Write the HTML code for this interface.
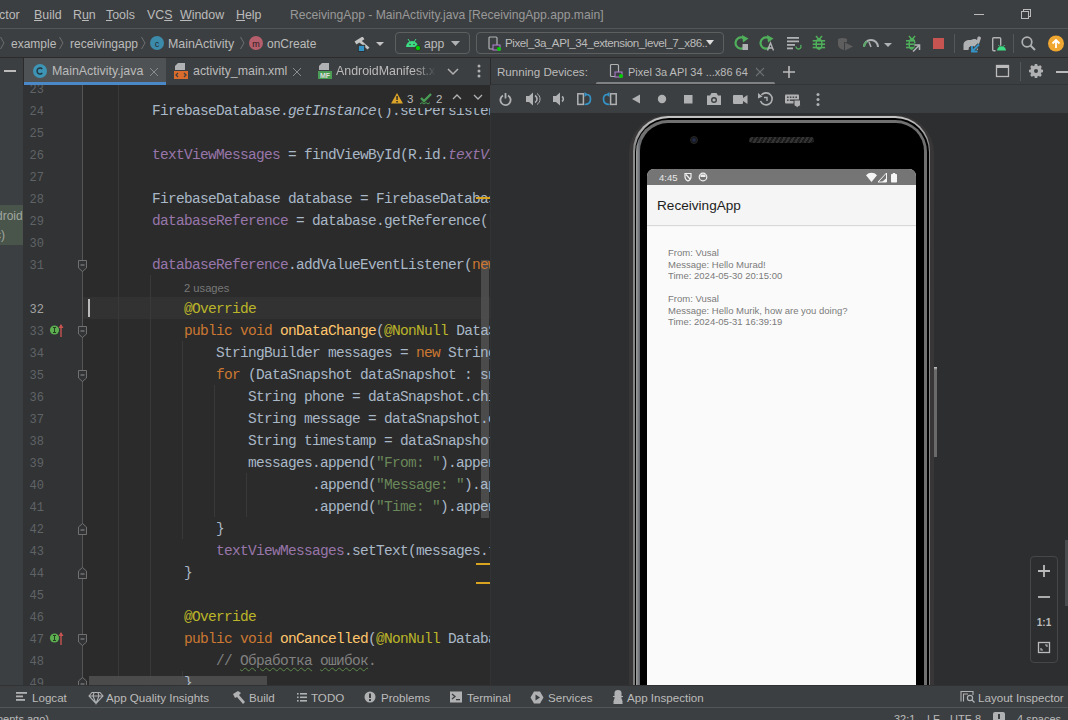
<!DOCTYPE html>
<html><head><meta charset="utf-8">
<style>
*{margin:0;padding:0;box-sizing:border-box}
html,body{width:1068px;height:720px;overflow:hidden;background:#3C3F41;font-family:"Liberation Sans",sans-serif;font-size:13px;color:#BBBBBB}
.a{position:absolute}
.t{position:absolute;white-space:nowrap;line-height:16px}
#menu{left:0;top:0;width:1068px;height:29px;background:#3C3F41;border-bottom:1px solid #515658}
#tb{left:0;top:29px;width:1068px;height:28px;background:#3C3F41}
#tabs{left:0;top:57px;width:1068px;height:28px;background:#3C3F41;border-top:1px solid #2B2B2B}
#ed{left:23px;top:85px;width:467px;height:600px;background:#2B2B2B;overflow:hidden}
#gut{left:0;top:0;width:59px;height:601px;background:#313335}
#emu{left:491px;top:113px;width:577px;height:572px;background:#2D2E30;overflow:hidden}
#twb{left:0;top:685px;width:1068px;height:22px;background:#3C3F41;border-top:1px solid #323232}
#sb{left:0;top:707px;width:1068px;height:13px;background:#3C3F41;border-top:1px solid #515658}
.code{position:absolute;left:65px;white-space:pre;font-family:"Liberation Mono",monospace;font-size:14.5px;letter-spacing:-0.7px;line-height:22px;color:#A9B7C6;margin-top:1px}
.ln.cur{color:#A4A3A3}
.ln{position:absolute;left:0;width:21px;margin-top:2px;text-align:right;font-family:"Liberation Mono",monospace;font-size:12px;line-height:22px;color:#606366}
.k{color:#CC7832}.an{color:#BBB529}.f{color:#9876AA}.fi{color:#9876AA;font-style:italic}.m{color:#FFC66D}.s{color:#6A8759}.c{color:#808080}.i{font-style:italic}.typo{text-decoration:underline wavy #5D8A4B;text-decoration-thickness:1px;text-underline-offset:2px}
</style></head><body>
<!-- MENU -->
<div id="menu" class="a">
  <div class="t" style="left:-1px;top:7px;font-size:12.4px">ctor</div>
  <div class="t" style="left:34px;top:7px;font-size:12.4px"><u>B</u>uild</div>
  <div class="t" style="left:73px;top:7px;font-size:12.4px">R<u>u</u>n</div>
  <div class="t" style="left:106px;top:7px;font-size:12.4px"><u>T</u>ools</div>
  <div class="t" style="left:147px;top:7px;font-size:12.4px">VC<u>S</u></div>
  <div class="t" style="left:180px;top:7px;font-size:12.4px"><u>W</u>indow</div>
  <div class="t" style="left:236px;top:7px;font-size:12.4px"><u>H</u>elp</div>
  <div class="t" style="left:290px;top:7px;font-size:12.15px;color:#999999">ReceivingApp - MainActivity.java [ReceivingApp.app.main]</div>
  <div class="a" style="left:974px;top:14px;width:10px;height:1px;background:#BBBBBB"></div>
  <div class="a" style="left:1023px;top:9px;width:8px;height:8px;border:1px solid #BBBBBB"></div>
  <div class="a" style="left:1021px;top:11px;width:8px;height:8px;border:1px solid #BBBBBB;background:#3C3F41"></div>
</div>
<!-- TOOLBAR -->
<div id="tb" class="a">
  <svg class="a" style="left:0;top:0" width="340" height="28">
    <g fill="none" stroke="#6E6E6E" stroke-width="1">
      <polyline points="0.5,8 4,14 0.5,20"/>
      <polyline points="59.5,8 63,14 59.5,20"/>
      <polyline points="141.5,8 145,14 141.5,20"/>
      <polyline points="240.5,8 244,14 240.5,20"/>
    </g>
    <circle cx="157" cy="14" r="7" fill="#3D8BAB"/>
    <text x="157" y="17.5" font-family="Liberation Sans" font-size="9" fill="#1E2A30" text-anchor="middle">c</text>
    <circle cx="256" cy="14" r="7" fill="#B55E6C"/>
    <text x="256" y="17.5" font-family="Liberation Sans" font-size="9" fill="#2B1A1E" text-anchor="middle">m</text>
  </svg>
  <div class="t" style="left:11px;top:7px;font-size:12px">example</div>
  <div class="t" style="left:70px;top:7px;font-size:12px">receivingapp</div>
  <div class="t" style="left:168px;top:7px;font-size:12.4px">MainActivity</div>
  <div class="t" style="left:267px;top:7px;font-size:12px">onCreate</div>
  <!-- hammer -->
  <svg class="a" style="left:354px;top:8px" width="32" height="16">
    <line x1="1.5" y1="6" x2="9.5" y2="0.8" stroke="#C4C4C4" stroke-width="3.3"/>
    <line x1="5.5" y1="3.8" x2="14.5" y2="11.5" stroke="#C4C4C4" stroke-width="2.8"/>
    <rect x="4.3" y="8.3" width="6.4" height="6.2" fill="#3592C4" stroke="#2E3133" stroke-width="1"/>
    <path d="M22,4.9 L30,4.9 L26,9 Z" fill="#C4C4C4"/>
  </svg>
  <!-- app combobox -->
  <div class="a" style="left:395px;top:3px;width:75px;height:22px;border:1px solid #5E6060;border-radius:4px"></div>
  <svg class="a" style="left:405px;top:8px" width="16" height="14">
    <path d="M1,10 A6,6 0 0 1 13,10 Z" fill="#3DDC84"/>
    <line x1="3" y1="2" x2="5" y2="5" stroke="#3DDC84" stroke-width="1"/>
    <line x1="11" y1="2" x2="9" y2="5" stroke="#3DDC84" stroke-width="1"/>
    <circle cx="5" cy="7.5" r="0.8" fill="#3C3F41"/><circle cx="9" cy="7.5" r="0.8" fill="#3C3F41"/>
    <circle cx="13" cy="11" r="2.6" fill="#00D000" stroke="#2B2B2B" stroke-width="0.8"/>
  </svg>
  <div class="t" style="left:424px;top:7px;font-size:12.2px">app</div>
  <svg class="a" style="left:451px;top:12px" width="12" height="6"><path d="M0,0 L9,0 L4.5,5 Z" fill="#AFB1B3"/></svg>
  <!-- device combobox -->
  <div class="a" style="left:476px;top:3px;width:248px;height:22px;border:1px solid #5E6060;border-radius:4px"></div>
  <svg class="a" style="left:488px;top:7px" width="14" height="16">
    <rect x="1" y="1" width="8" height="12" rx="1" fill="none" stroke="#AFB1B3" stroke-width="1.2"/>
    <rect x="5" y="9" width="7" height="5" fill="#3C3F41" stroke="#B37FD3" stroke-width="1"/>
    <circle cx="11" cy="13" r="2" fill="#00D000"/>
  </svg>
  <div class="t" style="left:505px;top:6px;font-size:11.6px;letter-spacing:-0.45px;width:206px;overflow:hidden">Pixel_3a_API_34_extension_level_7_x86..</div>
  <svg class="a" style="left:706px;top:11px" width="10" height="6"><path d="M0,0 L8,0 L4,5 Z" fill="#DDDDDD"/></svg>
  <!-- run icons -->
  <svg class="a" style="left:730px;top:0" width="338" height="28">
    <!-- apply changes and restart -->
    <path d="M15.5,10.5 A5.6,5.6 0 1 0 14.5,18.5" fill="none" stroke="#4FAF5B" stroke-width="2.2"/>
    <path d="M12,6 L18.5,9.5 L13,13.5 Z" fill="#4FAF5B"/>
    <rect x="12.5" y="15" width="5.5" height="6" fill="#AFB1B3"/>
    <!-- apply code changes -->
    <path d="M40.5,10.5 A5.6,5.6 0 1 0 39.5,18.5" fill="none" stroke="#4FAF5B" stroke-width="2.2"/>
    <path d="M37,6 L43.5,9.5 L38,13.5 Z" fill="#4FAF5B"/>
    <path d="M37.5,21.5 L40.5,14 L43.5,21.5 M38.5,19 L42.5,19" fill="none" stroke="#AFB1B3" stroke-width="1.4"/>
    <!-- lines -->
    <g fill="#AFB1B3"><rect x="57" y="8" width="12" height="1.8"/><rect x="57" y="11.5" width="12" height="1.8"/><rect x="57" y="15" width="8" height="1.8"/><rect x="57" y="18.5" width="6" height="1.8"/></g>
    <path d="M66,17.5 A2.5,2.5 0 1 0 70.5,16" fill="none" stroke="#4FAF5B" stroke-width="1.3"/>
    <!-- debug bug -->
    <g fill="#4FAF5B"><ellipse cx="89" cy="15" rx="3.6" ry="5.9"/><rect x="82.7" y="11" width="12.4" height="1.6"/><rect x="82.7" y="14.4" width="12.4" height="1.6"/><rect x="82.7" y="17.7" width="12.4" height="1.6"/></g>
    <path d="M86,7 L88.5,10 M92,7 L89.5,10" stroke="#4FAF5B" stroke-width="1.5"/>
    <g fill="#3C3F41"><rect x="87" y="12.6" width="4" height="1.8"/><rect x="87" y="16" width="4" height="1.8"/></g>
    <!-- profile disabled -->
    <path d="M108,10 C111,8.5 114,8.5 117,10 L117,13 L114,13 L114,21 C111,20.5 108,18.5 108,15 Z" fill="#5E5E5E"/>
    <path d="M115,13.5 L123,17.5 L115,21.5 Z" fill="#5E5E5E"/>
    <!-- profiler gauge -->
    <path d="M134,18 A7,7 0 0 1 148,18" fill="none" stroke="#AFB1B3" stroke-width="2"/>
    <path d="M134,18 A7,7 0 0 1 137,12.5" fill="none" stroke="#59A869" stroke-width="2"/>
    <line x1="141" y1="18" x2="139" y2="13" stroke="#AFB1B3" stroke-width="1.5"/>
    <path d="M154,14 L162,14 L158,18 Z" fill="#AFB1B3"/>
    <!-- attach debugger -->
    <g fill="#4FAF5B"><ellipse cx="182" cy="15" rx="3.6" ry="5.9"/><rect x="176" y="11" width="9" height="1.6"/><rect x="176" y="14.4" width="8" height="1.6"/><rect x="176" y="17.7" width="7" height="1.6"/></g>
    <path d="M179,7 L181.5,10 M185,7 L182.5,10" stroke="#4FAF5B" stroke-width="1.5"/>
    <g fill="#3C3F41"><rect x="180" y="12.6" width="4" height="1.8"/><rect x="180" y="16" width="4" height="1.8"/></g>
    <path d="M183,22.5 L189.5,16 M184.5,16 L189.5,16 L189.5,21" fill="none" stroke="#3C3F41" stroke-width="3.5"/>
    <path d="M183,22.5 L189.5,16 M184.5,16 L189.5,16 L189.5,21" fill="none" stroke="#AFB1B3" stroke-width="1.6"/>
    <!-- stop -->
    <rect x="203" y="9" width="11" height="11" fill="#C75450"/>
    <!-- separator -->
    <rect x="224" y="5" width="1" height="19" fill="#55585A"/>
    <!-- gradle sync -->
    <path d="M233.5,21 L233.5,16 C233.5,12 237,10.5 241,11 C243,9.5 246,9.5 247,11 L247.5,8.5 C248,7 250.5,7 251,9 L250,12 C249.5,14 249,15 248,16 L248,21 L245,21 L244.5,18 L239,18 L238.5,21 Z" fill="#AFB1B3"/>
    <path d="M242,22.5 L249,15.5 M242,17 L242,22.5 L247.5,22.5" fill="none" stroke="#3C3F41" stroke-width="3.6"/>
    <path d="M242,22.5 L249,15.5 M242,17 L242,22.5 L247.5,22.5" fill="none" stroke="#3592C4" stroke-width="1.9"/>
    <!-- device manager -->
    <rect x="262.7" y="8.7" width="8" height="13" rx="1" fill="none" stroke="#AFB1B3" stroke-width="1.4"/>
    <path d="M266.5,22 A5,4.6 0 0 1 276.5,22 Z" fill="#3C3F41" stroke="#3C3F41" stroke-width="2"/>
    <path d="M267,21.5 A4.5,4.3 0 0 1 276,21.5 Z" fill="#3DDC84"/>
    <path d="M268.5,16 L269.5,17.5 M274.5,16 L273.5,17.5" stroke="#3DDC84" stroke-width="0.9"/>
    <!-- separator -->
    <rect x="283" y="5" width="1" height="19" fill="#55585A"/>
    <!-- search -->
    <circle cx="297" cy="13" r="4.8" fill="none" stroke="#AFB1B3" stroke-width="1.7"/>
    <line x1="300.5" y1="16.5" x2="305" y2="21" stroke="#AFB1B3" stroke-width="2"/>
    <!-- update -->
    <circle cx="326" cy="14.5" r="8" fill="#F0A732"/>
    <path d="M326,19 L326,11 M322.5,14.5 L326,11 L329.5,14.5" fill="none" stroke="#FFFFFF" stroke-width="1.8"/>
  </svg>
</div>
<!-- TABS -->
<div id="tabs" class="a">
  <div class="a" style="left:4px;top:12px;width:12px;height:2px;background:#BBBBBB"></div>
  <div class="a" style="left:23px;top:0;width:1px;height:27px;background:#2B2B2B"></div>
  <div class="a" style="left:24px;top:0;width:142px;height:24px;background:#4E5254"></div>
  <div class="a" style="left:24px;top:24px;width:142px;height:3px;background:#4A88C7"></div>
  <svg class="a" style="left:32px;top:5px" width="16" height="16"><circle cx="8" cy="8" r="7" fill="#3E94B5"/><path d="M10.3,6 A3,3 0 1 0 10.3,10" fill="none" stroke="#22343C" stroke-width="1.4"/></svg>
  <div class="t" style="left:52px;top:5px;font-size:12.4px">MainActivity.java</div>
  <svg class="a" style="left:149px;top:9px" width="10" height="10"><path d="M1,1 L9,9 M9,1 L1,9" stroke="#8A8C8E" stroke-width="1"/></svg>
  <!-- xml tab -->
  <svg class="a" style="left:172px;top:4px" width="18" height="18">
    <path d="M6,1 L13,1 L13,8 L3,8 L3,4 Z" fill="#AFB1B3"/>
    <rect x="2" y="9" width="14" height="8" fill="#D96C2C"/>
    <path d="M6,11 L4,13 L6,15 M12,11 L14,13 L12,15" fill="none" stroke="#3C3F41" stroke-width="1.2"/>
  </svg>
  <div class="t" style="left:193px;top:5px;font-size:12.4px">activity_main.xml</div>
  <svg class="a" style="left:292px;top:9px" width="10" height="10"><path d="M1,1 L9,9 M9,1 L1,9" stroke="#8A8C8E" stroke-width="1"/></svg>
  <!-- manifest tab -->
  <svg class="a" style="left:316px;top:4px" width="18" height="18">
    <path d="M6,1 L13,1 L13,8 L3,8 L3,4 Z" fill="#AFB1B3"/>
    <rect x="2" y="9" width="14" height="8" fill="#499C54"/>
    <text x="9" y="16" font-family="Liberation Sans" font-size="7" font-weight="bold" fill="#DDDDDD" text-anchor="middle">MF</text>
  </svg>
  <div class="t" style="left:336px;top:5px;font-size:12.4px;width:100px;overflow:hidden;-webkit-mask-image:linear-gradient(90deg,#000 80%,transparent)">AndroidManifest.xml</div>
  <svg class="a" style="left:446px;top:9px" width="14" height="10"><path d="M2,2 L7,7 L12,2" fill="none" stroke="#AFB1B3" stroke-width="1.5"/></svg>
  <svg class="a" style="left:476px;top:5px" width="6" height="16"><circle cx="3" cy="3" r="1.5" fill="#AFB1B3"/><circle cx="3" cy="8" r="1.5" fill="#AFB1B3"/><circle cx="3" cy="13" r="1.5" fill="#AFB1B3"/></svg>
  <div class="a" style="left:490px;top:0;width:1px;height:27px;background:#2B2B2B"></div>
  <!-- running devices -->
  <div class="t" style="left:497px;top:6px;font-size:11.6px">Running Devices:</div>
  <svg class="a" style="left:609px;top:5px" width="16" height="16">
    <rect x="1.5" y="1.5" width="8" height="12" rx="1" fill="none" stroke="#AFB1B3" stroke-width="1.2"/>
    <rect x="6" y="9" width="7" height="5" fill="#3C3F41" stroke="#B37FD3" stroke-width="1"/>
    <circle cx="12" cy="13" r="2" fill="#00D000"/>
  </svg>
  <div class="t" style="left:628px;top:6px;font-size:11px">Pixel 3a API 34 ...x86 64</div>
  <svg class="a" style="left:755px;top:9px" width="10" height="10"><path d="M1,1 L9,9 M9,1 L1,9" stroke="#6E7072" stroke-width="1.1"/></svg>
  <div class="a" style="left:596px;top:24px;width:179px;height:3px;border-radius:1.5px;background:#7F8183"></div>
  <svg class="a" style="left:782px;top:7px" width="14" height="14"><path d="M7,1 L7,13 M1,7 L13,7" stroke="#BBBBBB" stroke-width="1.6"/></svg>
  <svg class="a" style="left:995px;top:6px" width="16" height="14"><rect x="1.5" y="1.5" width="12" height="11" fill="none" stroke="#BBBBBB" stroke-width="1.3"/><rect x="1.5" y="1.5" width="12" height="2.5" fill="#BBBBBB"/></svg>
  <div class="a" style="left:1020px;top:4px;width:1px;height:19px;background:#55585A"></div>
  <svg class="a" style="left:1028px;top:5px" width="16" height="16">
    <circle cx="8" cy="8" r="4.2" fill="none" stroke="#AFB1B3" stroke-width="3"/>
    <g stroke="#AFB1B3" stroke-width="2.6"><line x1="8" y1="1" x2="8" y2="15"/><line x1="1" y1="8" x2="15" y2="8"/><line x1="3" y1="3" x2="13" y2="13"/><line x1="13" y1="3" x2="3" y2="13"/></g>
    <circle cx="8" cy="8" r="4" fill="#AFB1B3"/><circle cx="8" cy="8" r="2" fill="#3C3F41"/>
  </svg>
  <div class="a" style="left:1056px;top:13px;width:12px;height:2px;background:#BBBBBB"></div>
  <div class="a" style="left:491px;top:26px;width:577px;height:1px;background:#323436"></div>
</div>
<div class="a" style="left:0;top:205px;width:23px;height:40px;background:#49544A;overflow:hidden">
  <div class="t" style="left:-4px;top:3px;font-size:12px;color:#A0A8A0">droid</div>
  <div class="t" style="left:-5px;top:22px;font-size:12px;color:#A0A8A0">c)</div>
</div>
<!-- EDITOR -->
<div id="ed" class="a">
  <div id="gut" class="a"></div>
    <div class="a" style="left:60px;top:212px;width:408px;height:22px;background:#323232"></div>
  <div class="a" style="left:59px;top:0;width:1px;height:601px;background:#555555"></div>
  <!-- indent guides -->
  <div class="a" style="left:95px;top:0;width:1px;height:601px;background:#393939"></div>
  <div class="a" style="left:127px;top:190px;width:1px;height:411px;background:#393939"></div>
  <div class="a" style="left:159px;top:256px;width:1px;height:198px;background:#393939"></div>
  <div class="a" style="left:191px;top:300px;width:1px;height:132px;background:#393939"></div>
  <div class="a" style="left:223px;top:388px;width:1px;height:44px;background:#393939"></div>
  <div class="a" style="left:159px;top:586px;width:1px;height:15px;background:#393939"></div>
<svg class="a" style="left:54px;top:175px" width="11" height="13"><path d="M1.5,0.5 L9.5,0.5 L9.5,8 L5.5,11.5 L1.5,8 Z" fill="#313335" stroke="#707070" stroke-width="1"/><line x1="3.5" y1="5" x2="7.5" y2="5" stroke="#909090" stroke-width="1"/></svg>
<svg class="a" style="left:54px;top:241px" width="11" height="13"><path d="M1.5,0.5 L9.5,0.5 L9.5,8 L5.5,11.5 L1.5,8 Z" fill="#313335" stroke="#707070" stroke-width="1"/><line x1="3.5" y1="5" x2="7.5" y2="5" stroke="#909090" stroke-width="1"/></svg>
<svg class="a" style="left:54px;top:285px" width="11" height="13"><path d="M1.5,0.5 L9.5,0.5 L9.5,8 L5.5,11.5 L1.5,8 Z" fill="#313335" stroke="#707070" stroke-width="1"/><line x1="3.5" y1="5" x2="7.5" y2="5" stroke="#909090" stroke-width="1"/></svg>
<svg class="a" style="left:54px;top:549px" width="11" height="13"><path d="M1.5,0.5 L9.5,0.5 L9.5,8 L5.5,11.5 L1.5,8 Z" fill="#313335" stroke="#707070" stroke-width="1"/><line x1="3.5" y1="5" x2="7.5" y2="5" stroke="#909090" stroke-width="1"/></svg>
<svg class="a" style="left:54px;top:437px" width="11" height="13"><path d="M1.5,12.5 L9.5,12.5 L9.5,5 L5.5,1.5 L1.5,5 Z" fill="#313335" stroke="#707070" stroke-width="1"/><line x1="3.5" y1="8" x2="7.5" y2="8" stroke="#909090" stroke-width="1"/></svg>
<svg class="a" style="left:54px;top:481px" width="11" height="13"><path d="M1.5,12.5 L9.5,12.5 L9.5,5 L5.5,1.5 L1.5,5 Z" fill="#313335" stroke="#707070" stroke-width="1"/><line x1="3.5" y1="8" x2="7.5" y2="8" stroke="#909090" stroke-width="1"/></svg>
<svg class="a" style="left:54px;top:591px" width="11" height="13"><path d="M1.5,12.5 L9.5,12.5 L9.5,5 L5.5,1.5 L1.5,5 Z" fill="#313335" stroke="#707070" stroke-width="1"/><line x1="3.5" y1="8" x2="7.5" y2="8" stroke="#909090" stroke-width="1"/></svg>
<svg class="a" style="left:26px;top:237px" width="16" height="16"><circle cx="5.5" cy="8" r="4.6" fill="#5CAE50"/><path d="M4,5.5 L7,5.5 M5.5,5.5 L5.5,10.5 M4,10.5 L7,10.5" stroke="#22401F" stroke-width="1"/><path d="M12,15 L12,3" stroke="#C75450" stroke-width="1.4"/><path d="M9.5,6 L12,2 L14.5,6 Z" fill="#C75450"/></svg>
<svg class="a" style="left:26px;top:545px" width="16" height="16"><circle cx="5.5" cy="8" r="4.6" fill="#5CAE50"/><path d="M4,5.5 L7,5.5 M5.5,5.5 L5.5,10.5 M4,10.5 L7,10.5" stroke="#22401F" stroke-width="1"/><path d="M12,15 L12,3" stroke="#C75450" stroke-width="1.4"/><path d="M9.5,6 L12,2 L14.5,6 Z" fill="#C75450"/></svg>
  <!-- inspection widget -->
  <div class="a" style="left:355px;top:0;width:112px;height:23px;background:#2B2B2B;z-index:2"></div>
  <svg class="a" style="left:367px;top:7px;z-index:3" width="100" height="14">
    <path d="M7,1 L13,11.5 L1,11.5 Z" fill="#DCA428"/>
    <rect x="6.3" y="4" width="1.5" height="4" fill="#2B2B2B"/><rect x="6.3" y="9" width="1.5" height="1.5" fill="#2B2B2B"/>
    <path d="M31,6 L34,9 L41,2" fill="none" stroke="#499C54" stroke-width="2.4"/>
    <path d="M30,12 L32,10.5 L34,12 L36,10.5 L38,12 L40,10.5" fill="none" stroke="#499C54" stroke-width="1"/>
    <path d="M63,7 L67,3 L71,7" fill="none" stroke="#AFB1B3" stroke-width="1.3"/>
    <path d="M84,3 L88,7 L92,3" fill="none" stroke="#AFB1B3" stroke-width="1.3"/>
  </svg>
  <div class="t" style="left:384px;top:6px;font-size:11.5px;z-index:3">3</div>
  <div class="t" style="left:413px;top:6px;font-size:11.5px;z-index:3">2</div>
  <!-- error stripe marks -->
  <div class="a" style="left:453px;top:112px;width:14px;height:2px;background:#D9A420;z-index:2"></div>
  <div class="a" style="left:453px;top:478px;width:14px;height:2px;background:#D9A420;z-index:2"></div>
  <div class="a" style="left:453px;top:497px;width:14px;height:2px;background:#D9A420;z-index:2"></div>
  <!-- scrollbars -->
  <div class="a" style="left:458px;top:175px;width:8px;height:258px;background:#4F4F4F;opacity:.9"></div>
  <div class="a" style="left:66px;top:591px;width:178px;height:9px;background:#4F4F4F;opacity:.9"></div>
  <!-- caret -->
  <div class="a" style="left:65px;top:214px;width:2px;height:18px;background:#BBBBBB"></div>
<div class="ln" style="top:-8px">23</div>
<div class="ln" style="top:14px">24</div>
<div class="code" style="top:14px">        FirebaseDatabase.<span class="i">getInstance</span>().setPersistenceEnabled(<span class="k">true</span>);</div>
<div class="ln" style="top:36px">25</div>
<div class="ln" style="top:58px">26</div>
<div class="code" style="top:58px">        <span class="f">textViewMessages</span> = findViewById(R.id.<span class="fi">textViewMessages</span>);</div>
<div class="ln" style="top:80px">27</div>
<div class="ln" style="top:102px">28</div>
<div class="code" style="top:102px">        FirebaseDatabase database = FirebaseDatabase.<span class="i">getInstance</span>();</div>
<div class="ln" style="top:124px">29</div>
<div class="code" style="top:124px">        <span class="f">databaseReference</span> = database.getReference(<span class="s">"messages"</span>);</div>
<div class="ln" style="top:146px">30</div>
<div class="ln" style="top:168px">31</div>
<div class="code" style="top:168px">        <span class="f">databaseReference</span>.addValueEventListener(<span class="k">new</span> ValueEventListener() {</div>
<div class="t" style="left:161px;top:195px;color:#787878;font-size:11.2px">2 usages</div>
<div class="ln cur" style="top:212px">32</div>
<div class="code" style="top:212px">            <span class="an">@Override</span></div>
<div class="ln" style="top:234px">33</div>
<div class="code" style="top:234px">            <span class="k">public void </span><span class="m">onDataChange</span>(<span class="an">@NonNull</span> DataSnapshot snapshot) {</div>
<div class="ln" style="top:256px">34</div>
<div class="code" style="top:256px">                StringBuilder messages = <span class="k">new </span>StringBuilder();</div>
<div class="ln" style="top:278px">35</div>
<div class="code" style="top:278px">                <span class="k">for </span>(DataSnapshot dataSnapshot : snapshot.getChildren()) {</div>
<div class="ln" style="top:300px">36</div>
<div class="code" style="top:300px">                    String phone = dataSnapshot.child(<span class="s">"phone"</span>).getValue(String.<span class="k">class</span>);</div>
<div class="ln" style="top:322px">37</div>
<div class="code" style="top:322px">                    String message = dataSnapshot.child(<span class="s">"message"</span>).getValue(String.<span class="k">class</span>);</div>
<div class="ln" style="top:344px">38</div>
<div class="code" style="top:344px">                    String timestamp = dataSnapshot.child(<span class="s">"timestamp"</span>).getValue(String.<span class="k">class</span>);</div>
<div class="ln" style="top:366px">39</div>
<div class="code" style="top:366px">                    messages.append(<span class="s">"From: "</span>).append(phone).append(<span class="s">"&#92;n"</span>)</div>
<div class="ln" style="top:388px">40</div>
<div class="code" style="top:388px">                            .append(<span class="s">"Message: "</span>).append(message).append(<span class="s">"&#92;n"</span>)</div>
<div class="ln" style="top:410px">41</div>
<div class="code" style="top:410px">                            .append(<span class="s">"Time: "</span>).append(timestamp).append(<span class="s">"&#92;n&#92;n"</span>);</div>
<div class="ln" style="top:432px">42</div>
<div class="code" style="top:432px">                }</div>
<div class="ln" style="top:454px">43</div>
<div class="code" style="top:454px">                <span class="f">textViewMessages</span>.setText(messages.toString());</div>
<div class="ln" style="top:476px">44</div>
<div class="code" style="top:476px">            }</div>
<div class="ln" style="top:498px">45</div>
<div class="ln" style="top:520px">46</div>
<div class="code" style="top:520px">            <span class="an">@Override</span></div>
<div class="ln" style="top:542px">47</div>
<div class="code" style="top:542px">            <span class="k">public void </span><span class="m">onCancelled</span>(<span class="an">@NonNull</span> DatabaseError error) {</div>
<div class="ln" style="top:564px">48</div>
<div class="code" style="top:564px">                <span class="c">// <span class="typo">Обработка</span> <span class="typo">ошибок</span>.</span></div>
<div class="ln" style="top:586px">49</div>
<div class="code" style="top:586px">            }</div>
</div>
<!-- EMULATOR -->
<div class="a" style="left:491px;top:85px;width:577px;height:28px;background:#3C3F41"></div>
<svg class="a" style="left:491px;top:85px" width="340" height="28">
  <g fill="none" stroke="#AFB1B3" stroke-width="1.8">
    <path d="M12,10.5 A5.1,5.1 0 1 0 17,10.5"/><line x1="14.5" y1="8" x2="14.5" y2="13.5"/>
  </g>
  <path d="M35,11 L38,11 L42,7.5 L42,20.5 L38,17 L35,17 Z" fill="#AFB1B3"/>
  <path d="M44,10.5 A4,4 0 0 1 44,17.5" fill="none" stroke="#AFB1B3" stroke-width="1.6"/>
  <path d="M46,8.5 A6.5,6.5 0 0 1 46,19.5" fill="none" stroke="#AFB1B3" stroke-width="1"/>
  <path d="M62,11 L65,11 L69,7.5 L69,20.5 L65,17 L62,17 Z" fill="#AFB1B3"/>
  <path d="M71,11.5 A3,3 0 0 1 71,16.5" fill="none" stroke="#AFB1B3" stroke-width="1.6"/>
  <rect x="86.8" y="8.8" width="5.6" height="10.6" fill="none" stroke="#AFB1B3" stroke-width="1.5"/>
  <path d="M95.5,9.5 C99,9.5 99.5,12 99.5,14 C99.5,17 97.5,19.5 93.5,19.5" fill="none" stroke="#3592C4" stroke-width="1.7"/>
  <path d="M93.5,7 L97,9.5 L93.5,12 Z" fill="#3592C4"/>
  <rect x="119.6" y="8.8" width="5.6" height="10.6" fill="none" stroke="#AFB1B3" stroke-width="1.5"/>
  <path d="M116.5,9.5 C113,9.5 112.5,12 112.5,14 C112.5,17 114.5,19.5 118.5,19.5" fill="none" stroke="#3592C4" stroke-width="1.7"/>
  <path d="M118.5,7 L115,9.5 L118.5,12 Z" fill="#3592C4"/>
  <path d="M141,14 L149,9.5 L149,18.5 Z" fill="#AFB1B3"/>
  <circle cx="171" cy="14" r="4.2" fill="#AFB1B3"/>
  <rect x="193" y="10" width="8.5" height="8.5" fill="#AFB1B3"/>
  <path d="M216,10.5 L219,10.5 L220.5,8 L225.5,8 L227,10.5 L230,10.5 L230,20 L216,20 Z" fill="#AFB1B3"/>
  <circle cx="223" cy="15" r="3" fill="#3C3F41"/><circle cx="223" cy="15" r="1.6" fill="#AFB1B3"/>
  <rect x="242" y="10" width="10" height="9" rx="1" fill="#AFB1B3"/>
  <path d="M252,13 L256.5,10 L256.5,19 L252,16 Z" fill="#AFB1B3"/>
  <path d="M270.5,10 A6,6 0 1 1 269.5,16" fill="none" stroke="#AFB1B3" stroke-width="1.6"/>
  <path d="M267,8 L271.5,11.5 L267,13.5 Z" fill="#AFB1B3"/>
  <path d="M273,12.5 L276,12.5 L276,16" fill="none" stroke="#AFB1B3" stroke-width="1.4"/>
  <rect x="294" y="9.5" width="14" height="9" rx="1" fill="#AFB1B3"/>
  <g fill="#3C3F41"><rect x="296" y="11.5" width="1.6" height="1.4"/><rect x="298.8" y="11.5" width="1.6" height="1.4"/><rect x="301.6" y="11.5" width="1.6" height="1.4"/><rect x="304.4" y="11.5" width="1.6" height="1.4"/><rect x="296" y="14.5" width="1.6" height="1.4"/><rect x="298.8" y="14.5" width="4.4" height="1.4"/></g>
  <path d="M303,15 L309.5,15 L309.5,20.5 L306.2,22.5 L303,20.5 Z" fill="#AFB1B3" stroke="#3C3F41" stroke-width="1"/>
  <circle cx="327" cy="9.5" r="1.5" fill="#AFB1B3"/><circle cx="327" cy="14.5" r="1.5" fill="#AFB1B3"/><circle cx="327" cy="19.5" r="1.5" fill="#AFB1B3"/>
</svg>
<div id="emu" class="a">
  <!-- phone: outer x 629-934, top 115 ; emu top 113 left 491 -->
  <div class="a" style="left:138px;top:2px;width:305px;height:700px;border-radius:38px;background:#383636"></div>
  <div class="a" style="left:142px;top:3px;width:297px;height:700px;border-radius:35px;background:linear-gradient(#C4C4C4,#8A8A8A 30px,#7A7A7A)"></div>
  <div class="a" style="left:143.5px;top:5px;width:294px;height:700px;border-radius:34px;background:#000"></div>
  <div class="a" style="left:145px;top:7px;width:291px;height:700px;border-radius:32px;background:linear-gradient(90deg,#A0A0A0,#60646A 4px,#707070 5px)"></div>
  <div class="a" style="left:149px;top:10px;width:284px;height:700px;border-radius:28px;background:#000"></div>
  <div class="a" style="left:443px;top:254px;width:2.5px;height:90px;background:linear-gradient(#CCCCCC,#6A6A6A 3px)"></div>
  <!-- camera & speaker -->
  <div class="a" style="left:199px;top:23px;width:8px;height:8px;border-radius:50%;background:radial-gradient(#2A3560 0,#1A1D2A 2px,#101010 3px);border:1px solid #2A2A2A"></div>
  <div class="a" style="left:258px;top:24px;width:65px;height:6px;border-radius:3px;background:repeating-linear-gradient(120deg,#1A1A1A 0 2px,#333 2px 4px)"></div>
  <!-- screen -->
  <div class="a" style="left:156px;top:56px;width:269px;height:600px;background:#FAFAFA;border-radius:7px 7px 0 0;overflow:hidden">
    <div class="a" style="left:0;top:0;width:269px;height:16px;background:#757575"></div>
    <div class="t" style="left:12px;top:2px;font-size:9.5px;color:#E8E8E8;line-height:14px">4:45</div>
    <svg class="a" style="left:36px;top:3px" width="30" height="10">
      <path d="M2,1.5 L8,1.5 L8,5 C8,7 6,8.5 5,9 C4,8.5 2,7 2,5 Z M3,2.5 L7,7" fill="none" stroke="#F0F0F0" stroke-width="1.2"/>
      <circle cx="20" cy="5" r="3.8" fill="none" stroke="#F0F0F0" stroke-width="1.2"/><rect x="17.5" y="2.5" width="5" height="2.5" fill="#F0F0F0"/>
    </svg>
    <svg class="a" style="left:218px;top:3px" width="40" height="11">
      <path d="M1,3.2 A7.5,7.5 0 0 1 12,3.2 L6.5,10 Z" fill="#F5F5F5"/>
      <path d="M21.5,1 L21.5,10 L13,10 Z" fill="none" stroke="#F5F5F5" stroke-width="1"/>
      <path d="M21.5,6 L21.5,10 L17,10 Z" fill="#F5F5F5"/>
      <rect x="26" y="2" width="6" height="8.5" rx="0.8" fill="#F5F5F5"/><rect x="27.8" y="1" width="2.4" height="1.5" fill="#F5F5F5"/>
    </svg>
    <div class="a" style="left:0;top:16px;width:269px;height:40px;background:#F5F5F5;box-shadow:0 1px 1px #D8D8D8"></div>
    <div class="t" style="left:10px;top:29px;font-size:13.6px;color:#1E1E1E">ReceivingApp</div>
    <div class="a" style="left:21px;top:78px;font-size:9.5px;line-height:11.5px;color:#7A7A7A;white-space:pre">From: Vusal
Message: Hello Murad!
Time: 2024-05-30 20:15:00

From: Vusal
Message: Hello Murik, how are you doing?
Time: 2024-05-31 16:39:19</div>
  </div>
  <!-- zoom controls -->
  <div class="a" style="left:539px;top:443px;width:28px;height:107px;border:1px solid #45484A;border-radius:4px;background:#2D2E30"></div>
  <svg class="a" style="left:539px;top:443px" width="28" height="107">
    <path d="M14,9 L14,21 M8,15 L20,15" stroke="#BBBBBB" stroke-width="1.8"/>
    <path d="M8,41 L20,41" stroke="#BBBBBB" stroke-width="1.8"/>
    <text x="14" y="70" font-family="Liberation Sans" font-size="10" font-weight="bold" fill="#BBBBBB" text-anchor="middle">1:1</text>
    <rect x="8.5" y="86.5" width="11" height="10" fill="none" stroke="#BBBBBB" stroke-width="1.3"/>
    <path d="M11,92 L11,94 L13,94 M17,91 L17,89 L15,89" fill="none" stroke="#BBBBBB" stroke-width="1.1"/>
  </svg>
  <div class="a" style="left:574px;top:427px;width:3px;height:66px;background:#4A4D4F"></div>
</div>
<div class="a" style="left:490px;top:113px;width:1px;height:572px;background:#323335"></div>
<!-- TOOL WINDOW BAR -->
<div id="twb" class="a">
  <svg class="a" style="left:0;top:2px" width="1068" height="20">
    <g fill="#AFB1B3">
      <!-- logcat -->
      <rect x="16" y="4" width="11" height="1.8"/><rect x="16" y="7.5" width="7" height="1.8"/><rect x="16" y="11" width="9" height="1.8"/>
    </g>
    <!-- diamond -->
    <path d="M92,4.5 L100,4.5 L103,8 L96,15.5 L89,8 Z M89,8 L103,8 M94,4.5 L93,8 L96,15.5 L99,8 L98,4.5" fill="none" stroke="#AFB1B3" stroke-width="1.1"/>
    <!-- hammer -->
    <path d="M233,6 L238,3 L241,5 L239,7 L245,14 L243,16 L237,9 L235,10 Z" fill="#AFB1B3"/>
    <!-- todo list -->
    <g fill="#AFB1B3"><rect x="297" y="5" width="1.6" height="1.6"/><rect x="297" y="8.5" width="1.6" height="1.6"/><rect x="297" y="12" width="1.6" height="1.6"/><rect x="300" y="5" width="7" height="1.6"/><rect x="300" y="8.5" width="7" height="1.6"/><rect x="300" y="12" width="7" height="1.6"/></g>
    <!-- problems -->
    <circle cx="370" cy="9" r="5.5" fill="#AFB1B3"/><rect x="369" y="5.5" width="2" height="4.5" fill="#3C3F41"/><rect x="369" y="11" width="2" height="2" fill="#3C3F41"/>
    <!-- terminal -->
    <rect x="450" y="3.5" width="12" height="11" fill="#AFB1B3"/><path d="M452,6 L455,8.5 L452,11" fill="none" stroke="#3C3F41" stroke-width="1.3"/><rect x="456" y="11" width="4" height="1.3" fill="#3C3F41"/>
    <!-- services -->
    <path d="M534,3.5 L540,3.5 L543.5,9.5 L540,15.5 L534,15.5 L530.5,9.5 Z" fill="#AFB1B3"/><path d="M535.5,6.5 L540,9.5 L535.5,12.5 Z" fill="#3C3F41"/>
    <!-- app inspection -->
    <path d="M614.5,5 A3.5,3 0 0 1 621.5,5 L621.5,8 L623,8 L623,9 L621.5,9 L621.5,10.5 L622.5,13 L622.5,16 L613.5,16 L613.5,13 L614.5,10.5 L614.5,9 L613,9 L613,8 L614.5,8 Z" fill="#AFB1B3"/>
    <!-- layout inspector -->
    <path d="M961,13.5 L961,3.5 L973,3.5 L973,7 M963.5,13.5 L963.5,6 L968,6" fill="none" stroke="#AFB1B3" stroke-width="1.1"/>
    <circle cx="970" cy="10" r="2.6" fill="none" stroke="#AFB1B3" stroke-width="1.2"/><line x1="972" y1="12" x2="974.5" y2="14.5" stroke="#AFB1B3" stroke-width="1.3"/>
  </svg>
  <div class="t" style="left:32px;top:4px;font-size:11.6px">Logcat</div>
  <div class="t" style="left:106px;top:4px;font-size:11.6px">App Quality Insights</div>
  <div class="t" style="left:249px;top:4px;font-size:11.6px">Build</div>
  <div class="t" style="left:311px;top:4px;font-size:11.6px">TODO</div>
  <div class="t" style="left:381px;top:4px;font-size:11.6px">Problems</div>
  <div class="t" style="left:467px;top:4px;font-size:11.6px">Terminal</div>
  <div class="t" style="left:548px;top:4px;font-size:11.6px">Services</div>
  <div class="t" style="left:627px;top:4px;font-size:11.6px">App Inspection</div>
  <div class="t" style="left:978px;top:4px;font-size:11.6px">Layout Inspector</div>
</div>
<!-- STATUS BAR -->
<div id="sb" class="a">
  <div class="t" style="left:-3px;top:4px;font-size:11px;line-height:14px">nents ago)</div>
  <div class="t" style="left:894px;top:4px;font-size:11px;line-height:14px">32:1</div>
  <div class="t" style="left:927px;top:4px;font-size:11px;line-height:14px">LF</div>
  <div class="t" style="left:950px;top:4px;font-size:11px;line-height:14px">UTF-8</div>
  <div class="a" style="left:993px;top:4px;width:12px;height:12px;background:#AFB1B3;border-radius:2px"></div>
  <div class="a" style="left:998px;top:6px;width:2px;height:5px;background:#3C3F41"></div>
  <div class="t" style="left:1017px;top:4px;font-size:11px;line-height:14px">4 spaces</div>
</div>
</body></html>
